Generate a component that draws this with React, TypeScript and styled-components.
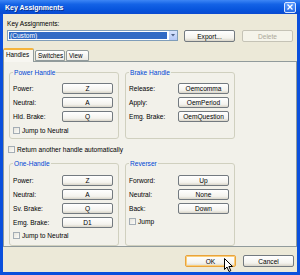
import React from 'react';
import styled, { createGlobalStyle } from 'styled-components';

const Global = createGlobalStyle`
  html, body { margin: 0; padding: 0; background: #ece9d8; }
  body { font-family: 'Liberation Sans', Arial, sans-serif; font-size: 6.6px; color: #000; }
`;

const Window = styled.div`
  width: 300px;
  height: 275px;
  display: flex;
  flex-direction: column;
  background: #0a4fdc;
  box-sizing: border-box;
  overflow: hidden;
`;

const TitleBar = styled.div`
  height: 14px;
  flex: none;
  display: flex;
  align-items: center;
  justify-content: space-between;
  padding: 0 4px 0 5px;
  background: linear-gradient(#3d86f5 0%, #1463e6 30%, #0754dc 70%, #0a4ad0 100%);
  color: #fff;
  font-weight: bold;
  font-size: 7px;
  text-shadow: 1px 1px 0 #0a2f8a;
`;

const CloseBtn = styled.div`
  width: 10px;
  height: 9px;
  border: 1px solid #dce8ff;
  border-radius: 2px;
  background: linear-gradient(#5b9cff, #2b6fe8);
  display: flex;
  align-items: center;
  justify-content: center;
`;

const Client = styled.div`
  flex: 1;
  margin: 0 3px 3px 3px;
  background: #ece9d8;
  display: flex;
  flex-direction: column;
`;

const Header = styled.div`
  padding: 5px 4px 0 4px;
`;

const Label = styled.div`
  height: 9px;
  line-height: 9px;
  margin-bottom: 2px;
`;

const TopRow = styled.div`
  display: flex;
  align-items: flex-start;
`;

const Combo = styled.div`
  width: 171px;
  height: 11px;
  box-sizing: border-box;
  border: 1px solid #7f9db9;
  background: #fff;
  display: flex;
  align-items: stretch;
  margin-right: 6px;
`;

const ComboValue = styled.div`
  flex: 1;
  margin: 1px;
  background: #316ac5;
  color: #fff;
  line-height: 7px;
  padding-left: 1px;
`;

const ComboArrow = styled.div`
  width: 8px;
  background: linear-gradient(#d6e3fd, #b4c8f6);
  border-left: 1px solid #fff;
  display: flex;
  align-items: center;
  justify-content: center;
`;

const Button = styled.button<{ $disabled?: boolean; $default?: boolean }>`
  width: 51px;
  height: 12px;
  padding: 0;
  box-sizing: border-box;
  border: 1px solid ${p => (p.$disabled ? '#c5c3b6' : p.$default ? '#e9a33c' : '#737a80')};
  border-radius: 2px;
  background: ${p => (p.$disabled ? '#f5f4ea' : 'linear-gradient(#ffffff, #f4f3ee 70%, #d9d5c9)')};
  box-shadow: ${p => (p.$default ? 'inset 0 0 0 1px #fbcf7a' : 'none')};
  color: ${p => (p.$disabled ? '#aca899' : '#000')};
  font-family: 'Liberation Sans', Arial, sans-serif;
  font-size: 6.6px;
  line-height: 9px;
  cursor: default;
  flex: none;
`;

const KeyButton = styled(Button)`
  height: 11px;
  line-height: 8px;
`;

const TabStrip = styled.div`
  margin-top: 6px;
  height: 13px;
  display: flex;
  align-items: flex-end;
  position: relative;
  z-index: 1;
`;

const Tab = styled.div<{ $active?: boolean; $w: number }>`
  width: ${p => p.$w}px;
  box-sizing: border-box;
  height: ${p => (p.$active ? 14 : 11)}px;
  margin-bottom: ${p => (p.$active ? -1 : 0)}px;
  margin-right: 1px;
  border: 1px solid #919b9c;
  border-bottom: ${p => (p.$active ? 'none' : '1px solid #919b9c')};
  border-top: ${p => (p.$active ? '2px solid #f5b43c' : '1px solid #919b9c')};
  border-radius: 2px 2px 0 0;
  background: ${p => (p.$active ? '#f7f6f1' : 'linear-gradient(#ffffff, #ecebe5)')};
  padding-left: 2px;
  white-space: nowrap;
  font-size: 6.3px;
  line-height: 9px;
`;

const Panel = styled.div`
  height: 186px;
  box-sizing: border-box;
  border: 1px solid #919b9c;
  background: #f2f1ea;
  padding: 10px 5px 0 5px;
`;

const GroupGrid = styled.div<{ $h: number }>`
  display: grid;
  grid-template-columns: 110px 110px;
  column-gap: 6px;
  height: ${p => p.$h}px;
`;

const Group = styled.div<{ $pt: number }>`
  position: relative;
  border: 1px solid #d0d0bf;
  border-radius: 3px;
  padding: ${p => p.$pt}px 0 0 3px;
  display: flex;
  flex-direction: column;
  gap: 3px;
`;

const GroupTitle = styled.span`
  position: absolute;
  top: -5px;
  left: 3px;
  padding: 0 1px;
  background: #f2f1ea;
  color: #0046d5;
  line-height: 9px;
`;

const Row = styled.div`
  display: grid;
  grid-template-columns: 49px 51px;
  align-items: center;
  height: 11px;
`;

const CheckRow = styled.label<{ $mt?: number }>`
  display: flex;
  align-items: center;
  gap: 2px;
  height: 9px;
  margin-top: ${p => p.$mt ?? 0}px;
`;

const Box = styled.span`
  width: 7px;
  height: 7px;
  box-sizing: border-box;
  border: 1px solid #a4adb5;
  background: linear-gradient(135deg, #e6e4dc, #fbfbf8);
  flex: none;
`;

const StandaloneCheck = styled(CheckRow)`
  margin: 6px 0 0 -1px;
  height: 8px;
`;

const Footer = styled.div`
  display: flex;
  justify-content: flex-end;
  gap: 7px;
  padding: 8px 3px 0 0;
  position: relative;
`;

const Cursor = styled.svg`
  position: absolute;
  left: 221px;
  top: 11px;
`;

const Check = ({ text, mt }: { text: string; mt?: number }) => (
  <CheckRow $mt={mt}>
    <Box />
    <span>{text}</span>
  </CheckRow>
);

const KeyRow = ({ label, value }: { label: string; value: string }) => (
  <Row>
    <span>{label}</span>
    <KeyButton>{value}</KeyButton>
  </Row>
);

export default function App() {
  return (
    <>
      <Global />
      <Window>
        <TitleBar>
          <span>Key Assignments</span>
          <CloseBtn>
            <svg width="6" height="6" viewBox="0 0 6 6">
              <path d="M0.5 0.5 L5.5 5.5 M5.5 0.5 L0.5 5.5" stroke="#fff" strokeWidth="1.3" />
            </svg>
          </CloseBtn>
        </TitleBar>
        <Client>
          <Header>
            <Label>Key Assignments:</Label>
            <TopRow>
              <Combo>
                <ComboValue>(Custom)</ComboValue>
                <ComboArrow>
                  <svg width="4" height="3" viewBox="0 0 4 3">
                    <path d="M0 0 L4 0 L2 2.5 Z" fill="#4d6185" />
                  </svg>
                </ComboArrow>
              </Combo>
              <Button>Export...</Button>
              <Button $disabled style={{ marginLeft: 7 }}>Delete</Button>
            </TopRow>
          </Header>
          <TabStrip>
            <Tab $active $w={31}>Handles</Tab>
            <Tab $w={30}>Switches</Tab>
            <Tab $w={23}>View</Tab>
          </TabStrip>
          <Panel>
            <GroupGrid $h={67}>
              <Group $pt={10}>
                <GroupTitle>Power Handle</GroupTitle>
                <KeyRow label="Power:" value="Z" />
                <KeyRow label="Neutral:" value="A" />
                <KeyRow label="Hld. Brake:" value="Q" />
                <Check text="Jump to Neutral" mt={1} />
              </Group>
              <Group $pt={10}>
                <GroupTitle>Brake Handle</GroupTitle>
                <KeyRow label="Release:" value="Oemcomma" />
                <KeyRow label="Apply:" value="OemPeriod" />
                <KeyRow label="Emg. Brake:" value="OemQuestion" />
              </Group>
            </GroupGrid>
            <StandaloneCheck>
              <Box />
              <span>Return another handle automatically</span>
            </StandaloneCheck>
            <div style={{ height: 10 }} />
            <GroupGrid $h={83}>
              <Group $pt={11}>
                <GroupTitle>One-Handle</GroupTitle>
                <KeyRow label="Power:" value="Z" />
                <KeyRow label="Neutral:" value="A" />
                <KeyRow label="Sv. Brake:" value="Q" />
                <KeyRow label="Emg. Brake:" value="D1" />
                <Check text="Jump to Neutral" />
              </Group>
              <Group $pt={11}>
                <GroupTitle>Reverser</GroupTitle>
                <KeyRow label="Forword:" value="Up" />
                <KeyRow label="Neutral:" value="None" />
                <KeyRow label="Back:" value="Down" />
                <Check text="Jump" />
              </Group>
            </GroupGrid>
          </Panel>
          <Footer>
            <Button $default>OK</Button>
            <Button>Cancel</Button>
            <Cursor width="10" height="15" viewBox="0 0 10 15">
              <path d="M0.5 0.5 L0.5 11.5 L3 9 L5 13.5 L6.8 12.7 L4.9 8.5 L8.5 8.5 Z" fill="#fff" stroke="#000" strokeWidth="1" strokeLinejoin="round" />
            </Cursor>
          </Footer>
        </Client>
      </Window>
    </>
  );
}
